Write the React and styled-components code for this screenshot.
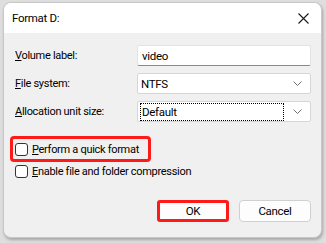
import React from "react";
import styled, { createGlobalStyle } from "styled-components";

const GlobalStyle = createGlobalStyle`
  html, body {
    margin: 0;
    padding: 0;
    background: #dedede;
  }
  body {
    font-family: Roboto, "Liberation Sans", Arial, sans-serif;
    font-size: 11px;
    letter-spacing: -0.3px;
    color: #000;
  }
`;

export default function App() {
  return (
    <Page>
      <GlobalStyle />
      <Window>
        <TitleBar>
          <Title>Format D:</Title>
          <CloseButton aria-label="Close">
            <svg width="11" height="11" viewBox="0 0 11 11">
              <path d="M0.5 0.5 L10.5 10.5 M10.5 0.5 L0.5 10.5" stroke="#1a1a1a" strokeWidth="1.1" fill="none" />
            </svg>
          </CloseButton>
        </TitleBar>
        <Body>
          <Form>
            <Label>
              <Key>V</Key>olume label:
            </Label>
            <TextInput>video</TextInput>
            <Label>
              <Key>F</Key>ile system:
            </Label>
            <Select>
              <span>NTFS</span>
              <Chevron />
            </Select>
            <Label>
              <Key>A</Key>llocation unit size:
            </Label>
            <Select>
              <FocusText>Default</FocusText>
              <Chevron />
            </Select>
          </Form>
          <Checks>
            <CheckRow $highlight>
              <Box />
              <span>
                <Key>P</Key>erform a quick format
              </span>
            </CheckRow>
            <CheckRow>
              <Box />
              <span>
                <Key>E</Key>nable file and folder compression
              </span>
            </CheckRow>
          </Checks>
          <Footer>
            <Button $highlight>OK</Button>
            <Button>Cancel</Button>
          </Footer>
        </Body>
      </Window>
    </Page>
  );
}

function Chevron() {
  return (
    <ChevronIcon width="9" height="5" viewBox="0 0 9 5">
      <path d="M0.5 0.5 L4.5 4.5 L8.5 0.5" stroke="#707070" strokeWidth="1" fill="none" />
    </ChevronIcon>
  );
}

const Page = styled.div`
  width: 326px;
  height: 243px;
  box-sizing: border-box;
  padding: 2px 4px 5px 3px;
  display: flex;
`;

const Window = styled.div`
  flex: 1;
  display: flex;
  flex-direction: column;
  background: #f0f0f0;
  border: 1px solid #c8c8c8;
  border-radius: 8px;
  overflow: hidden;
  box-shadow: 1px 2px 3px rgba(0, 0, 0, 0.25);
`;

const TitleBar = styled.div`
  height: 30px;
  background: #fff;
  display: flex;
  align-items: center;
  justify-content: space-between;
  padding: 0 11px 0 8px;
  flex-shrink: 0;
`;

const Title = styled.div`
  font-size: 11.5px;
`;

const CloseButton = styled.div`
  display: flex;
  align-items: center;
  justify-content: center;
  width: 14px;
  height: 14px;
`;

const Body = styled.div`
  flex: 1;
  display: flex;
  flex-direction: column;
  padding: 12px 10px 15px 11px;
`;

const Form = styled.div`
  display: grid;
  grid-template-columns: 122px 1fr;
  grid-auto-rows: 21px;
  row-gap: 7px;
  align-items: center;
`;

const Label = styled.div`
  line-height: 21px;
`;

const Key = styled.span`
  text-decoration: underline;
`;

const TextInput = styled.div`
  height: 21px;
  box-sizing: border-box;
  background: #fff;
  border: 1px solid #e3e3e3;
  border-bottom: 1px solid #8a8a8a;
  border-radius: 2px;
  padding: 0 4px;
  display: flex;
  align-items: center;
  font-size: 11.5px;
`;

const Select = styled.div`
  height: 21px;
  box-sizing: border-box;
  background: #fff;
  border: 1px solid #d6d6d6;
  border-radius: 2px;
  padding: 0 8px 0 3px;
  display: flex;
  align-items: center;
  justify-content: space-between;
  font-size: 11.5px;
`;

const FocusText = styled.span`
  flex: 1;
  margin-right: 10px;
  outline: 1px dotted #000;
  padding: 0 1px;
  line-height: 16px;
`;

const ChevronIcon = styled.svg`
  flex-shrink: 0;
`;

const Checks = styled.div`
  margin-top: 14px;
  margin-left: -5px;
  display: flex;
  flex-direction: column;
  align-items: flex-start;
`;

const CheckRow = styled.div`
  display: flex;
  align-items: center;
  gap: 4px;
  height: ${(p) => (p.$highlight ? "20px" : "17px")};
  padding: 0 9px 0 2px;
  border: 3px solid ${(p) => (p.$highlight ? "#ff1a1a" : "transparent")};
  border-radius: 4px;
  margin-top: ${(p) => (p.$highlight ? "0" : "-2px")};
`;

const Box = styled.div`
  width: 13px;
  height: 13px;
  box-sizing: border-box;
  border: 1px solid #333;
  border-radius: 3px;
  background: #fff;
`;

const Footer = styled.div`
  margin-top: auto;
  display: flex;
  justify-content: flex-end;
  align-items: center;
  gap: 10px;
`;

const Button = styled.div`
  width: 72px;
  height: 22px;
  box-sizing: border-box;
  display: flex;
  align-items: center;
  justify-content: center;
  background: #fdfdfd;
  border: ${(p) => (p.$highlight ? "3px solid #ff1a1a" : "1px solid #d0d0d0")};
  border-radius: ${(p) => (p.$highlight ? "3px" : "4px")};
  font-size: 11.5px;
`;
